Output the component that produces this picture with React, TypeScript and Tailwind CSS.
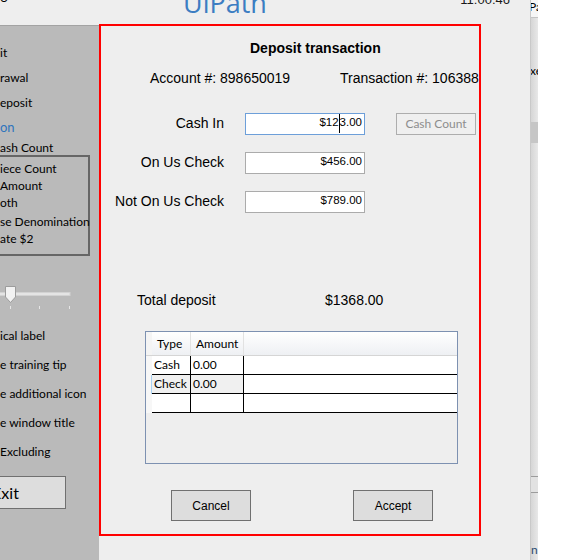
const ARIAL = "font-['Liberation_Sans',Arial,sans-serif]"
const SEGOE = "font-['Segoe_UI',Lato,'Noto_Sans',sans-serif]"

export default function App() {
  return (
    <div className="flex h-[560px] w-[580px] overflow-hidden bg-white">
      <div className="flex w-[530px] shrink-0 flex-col bg-[#eeeeee]">
        <TopBar />
        <div className="flex min-h-0 flex-1">
          <Sidebar />
          <DepositDialog />
        </div>
      </div>
      <ScrollEdge />
      <div className="flex-1 bg-white" />
    </div>
  )
}

function TopBar() {
  return (
    <div className="flex h-[24px] shrink-0 items-start overflow-hidden">
      <span className={`${SEGOE} -mt-[10px] text-[14px] leading-[14px]`}>o</span>
      <span className="ml-[175px] -mt-[11px] font-['Open_Sans',sans-serif] text-[27px] leading-[27px] text-[#3c7dc2]">
        UiPath
      </span>
      <span className={`${ARIAL} ml-auto mr-[20px] -mt-[7px] text-[13px] leading-[13px] text-[#1a1a1a]`}>11:00:46</span>
    </div>
  )
}

function Sidebar() {
  return (
    <aside
      className={`${SEGOE} mt-[1px] flex w-[99px] shrink-0 flex-col overflow-hidden whitespace-nowrap border-t border-[#a3a3a3] bg-[#bababa] pt-[14px] text-[12px] text-black`}
    >
      <div className="flex h-[25px] items-center">it</div>
      <div className="flex h-[25px] items-center">rawal</div>
      <div className="flex h-[25px] items-center">eposit</div>
      <div className="flex h-[25px] items-center text-[13px] text-[#2f74bd]">on</div>
      <div className="flex h-[15px] items-center">ash Count</div>

      {/* grouped options */}
      <div className="h-[101px] w-[90px] shrink-0 border-2 border-l-0 border-[#666666] pt-[3px]">
        <div className="flex h-[17px] items-center">iece Count</div>
        <div className="flex h-[17px] items-center">Amount</div>
        <div className="flex h-[17px] items-center">oth</div>
        <div className="mt-[2px] flex h-[17px] items-center">se Denomination</div>
        <div className="flex h-[17px] items-center">ate $2</div>
      </div>

      <svg className="mt-[30px] shrink-0" width="99" height="24" viewBox="0 0 99 24">
        <rect x="-1" y="6.5" width="71" height="3" fill="#e4e4e4" stroke="#d2d2d2" />
        <path d="M5.5 0.5H15.5V11L10.5 16.5L5.5 11Z" fill="#f2f2f2" stroke="#9c9c9c" />
        <rect x="10" y="20" width="1" height="3" fill="#e6e6e6" />
        <rect x="39" y="20" width="1" height="3" fill="#e6e6e6" />
        <rect x="69" y="20" width="1" height="3" fill="#e6e6e6" />
      </svg>

      <div className="mt-[11px] flex h-[29px] items-center">ical label</div>
      <div className="flex h-[29px] items-center">e training tip</div>
      <div className="flex h-[29px] items-center">e additional icon</div>
      <div className="flex h-[29px] items-center">e window title</div>
      <div className="flex h-[29px] items-center">Excluding</div>

      <button className="-ml-[55px] mt-[10px] flex h-[33px] w-[121px] shrink-0 items-center justify-center border border-[#707070] bg-[#dddddd] text-[16px]">
        Exit
      </button>
    </aside>
  )
}

function AmountRow({
  label,
  value,
  focused,
  className,
  children,
}: {
  label: string
  value: React.ReactNode
  focused?: boolean
  className?: string
  children?: React.ReactNode
}) {
  return (
    <div className={`flex h-[22px] shrink-0 items-center ${className ?? ''}`}>
      <span className="w-[123px] pb-[2px] text-right">{label}</span>
      <div
        className={`ml-[21px] flex h-[22px] w-[120px] items-center justify-end border bg-white pb-[2px] pr-[2px] text-[11.5px] ${
          focused ? 'border-[#6d9fd9]' : 'border-[#ababab]'
        }`}
      >
        {value}
      </div>
      {children}
    </div>
  )
}

function DepositDialog() {
  return (
    <section
      className={`${ARIAL} flex h-[512px] w-[382px] shrink-0 flex-col overflow-hidden whitespace-nowrap border-2 border-[#ff0000] bg-[#eeeeee] text-[14px] text-black`}
    >
      <h1 className="ml-[149px] mt-[14px] h-[16px] text-[14px] font-bold leading-[16px]">Deposit transaction</h1>
      <div className="mt-[14px] flex h-[16px] leading-[16px]">
        <span className="ml-[49px] w-[190px]">Account #: 898650019</span>
        <span>Transaction #: 106388</span>
      </div>

      <AmountRow
        label="Cash In"
        focused
        className="mt-[27px]"
        value={
          <>
            $12
            <span className="inline-block h-[19px] w-0 border-l border-black" />
            3.00
          </>
        }
      >
        <button
          className={`${SEGOE} ml-[31px] flex h-[22px] w-[80px] items-center justify-center border border-[#adadad] bg-[#efefef] text-[12px] text-[#8d8d8d]`}
        >
          Cash Count
        </button>
      </AmountRow>
      <AmountRow label="On Us Check" className="mt-[17px]" value="$456.00" />
      <AmountRow label="Not On Us Check" className="mt-[17px]" value="$789.00" />

      <div className="mt-[79px] flex h-[16px] leading-[16px]">
        <span className="ml-[36px] w-[188px]">Total deposit</span>
        <span>$1368.00</span>
      </div>

      <TransactionTable />

      <div className="mt-[26px] flex text-[12px]">
        <button className="ml-[70px] h-[31px] w-[80px] border border-[#707070] bg-[#dddddd]">Cancel</button>
        <button className="ml-[102px] h-[31px] w-[80px] border border-[#707070] bg-[#dddddd]">Accept</button>
      </div>
    </section>
  )
}

const ROWS = [
  { type: 'Cash', amount: '0.00', selected: false },
  { type: 'Check', amount: '0.00', selected: true },
  { type: '', amount: '', selected: false },
]

function TransactionTable() {
  return (
    <div
      className={`${SEGOE} ml-[44px] mt-[23px] flex h-[133px] w-[313px] shrink-0 flex-col border border-[#7d91b1] bg-[#eeeeee] text-[12px] text-black`}
    >
      <div className="flex h-[24px] shrink-0 border-b border-[#d5d5d5] bg-linear-to-b from-white to-[#eef0f3]">
        <div className="w-[6px] bg-[#f4f4f4]" />
        <div className="flex w-[39px] items-center border-r border-[#e2e2e2] pl-[5px]">Type</div>
        <div className="flex w-[53px] items-center border-r border-[#e2e2e2] pl-[5px]">Amount</div>
        <div className="flex-1" />
      </div>
      {ROWS.map((r, i) => (
        <div key={i} className="flex h-[19px] shrink-0">
          <div className={`w-[6px] bg-[#f7f7f7] ${r.selected ? 'border-r border-[#a9d1f2]' : ''}`} />
          <div className="flex flex-1 border-b border-black bg-white">
            <div className={`flex w-[39px] items-center border-r border-black pl-[2px] ${r.selected ? 'bg-[#f0f0f0]' : ''}`}>
              {r.type}
            </div>
            <div className={`flex w-[53px] items-center border-r border-black pl-[2px] ${r.selected ? 'bg-[#f0f0f0]' : ''}`}>
              {r.amount}
            </div>
            <div className="flex-1" />
          </div>
        </div>
      ))}
    </div>
  )
}

function ScrollEdge() {
  return (
    <div
      className={`${SEGOE} flex w-[8px] shrink-0 flex-col overflow-hidden whitespace-nowrap border-l border-[#c9c9c9] bg-linear-to-r from-[#d6d6d6] to-[#e8e8e8] text-[12px] leading-[12px] text-black`}
    >
      <div className="h-[17px] shrink-0 bg-[#f6f6f6] pt-[1px]">
        <span className="-ml-[2px]">Pa</span>
      </div>
      <div className="h-[1px] shrink-0 bg-[#c4c4c4]" />
      <div className="h-[47px] shrink-0" />
      <div className="h-[12px] shrink-0">
        <span className="-ml-[1px]">xe</span>
      </div>
      <div className="h-[45px] shrink-0" />
      <div className="h-[21px] shrink-0 bg-[#c6c6c6]" />
      <div className="h-[333px] shrink-0" />
      <div className="h-[1px] shrink-0 bg-[#9c9c9c]" />
      <div className="h-[15px] shrink-0 bg-[#e2e2e2]" />
      <div className="h-[1px] shrink-0 bg-[#9c9c9c]" />
      <div className="h-[51px] shrink-0" />
      <div className="h-[12px] shrink-0 text-[#2a4a70]">n</div>
    </div>
  )
}
